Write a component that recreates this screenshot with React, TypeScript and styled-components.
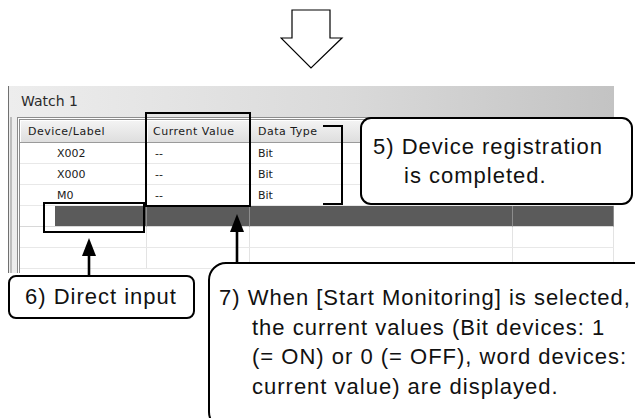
import React from "react";
import styled, { createGlobalStyle } from "styled-components";

const GlobalStyle = createGlobalStyle`
  html, body {
    margin: 0;
    padding: 0;
    background: #fff;
    overflow: hidden;
  }
`;

const Page = styled.div`
  position: relative;
  width: 635px;
  height: 418px;
  overflow: hidden;
  background: #fff;
`;

const ArrowRow = styled.div`
  height: 86px;
  box-sizing: border-box;
  padding: 9px 0 0 280px;
`;

const Window = styled.div`
  margin-left: 8px;
  width: 605px;
  height: 187px;
  display: flex;
  flex-direction: column;
  border-left: 1px solid #707070;
  background: linear-gradient(to right, #ededed, #dadada 55%, #c3c3c3);
  overflow: hidden;
`;

const TitleBar = styled.div`
  height: 31px;
  line-height: 31px;
  padding-left: 12px;
  font-family: "DejaVu Sans", Tahoma, sans-serif;
  font-size: 14px;
  color: #2a2a2a;
`;

const WindowBody = styled.div`
  flex: 1;
  display: flex;
  padding-left: 5px;
  border-left: 2px solid #bdbdbd;
  margin-left: 1px;
`;

const Grid = styled.div`
  flex: 1;
  display: grid;
  grid-template-columns: 127px 103px 263px 1fr;
  grid-auto-rows: 21px;
  grid-template-rows: 23px;
  border-top: 3px double #8c8c8c;
  border-left: 3px double #8c8c8c;
  background: #fff;
  font-family: "DejaVu Sans", Tahoma, sans-serif;
  font-size: 11px;
  color: #1a1a1a;
`;

const HeadCell = styled.div<{ $pad: number }>`
  display: flex;
  align-items: center;
  padding-left: ${(p) => p.$pad}px;
  background: linear-gradient(#f4f4f4, #dedede);
  border-right: 1px solid #9e9e9e;
  border-bottom: 1px solid #9a9a9a;
  box-shadow: inset 1px 1px 0 #fff;
  letter-spacing: 0.5px;
  white-space: nowrap;
  overflow: hidden;
`;

const Cell = styled.div<{ $pad: number; $dark?: boolean; $inset?: number }>`
  display: flex;
  align-items: center;
  padding-left: ${(p) => p.$pad}px;
  white-space: nowrap;
  border-bottom: 1px solid ${(p) => (p.$dark ? "#d8d8d8" : "#e8e8e8")};
  border-right: 1px solid ${(p) => (p.$dark ? "#8c8c8c" : "#e3e3e3")};
  background: ${(p) =>
    p.$dark
      ? `linear-gradient(to right, #fff ${p.$inset ?? 0}px, #5b5b5b ${p.$inset ?? 0}px)`
      : "#fff"};
`;

const Annotation = styled.div<{ $x: number; $y: number; $w: number; $h: number }>`
  position: absolute;
  left: ${(p) => p.$x}px;
  top: ${(p) => p.$y}px;
  width: ${(p) => p.$w}px;
  height: ${(p) => p.$h}px;
  box-sizing: border-box;
  border: 2px solid #000;
`;

const Bracket = styled(Annotation)`
  border-left: none;
`;

const PointerSvg = styled.svg<{ $x: number; $y: number }>`
  position: absolute;
  left: ${(p) => p.$x}px;
  top: ${(p) => p.$y}px;
  overflow: visible;
`;

const Callout = styled.div`
  box-sizing: border-box;
  flex-shrink: 0;
  background: #fff;
  border: 2px solid #000;
  font-family: "Liberation Sans", Arial, sans-serif;
  font-size: 22px;
  letter-spacing: 1px;
  color: #111;
  white-space: nowrap;
`;

const RegisteredNote = styled(Callout)`
  position: absolute;
  left: 360px;
  top: 117px;
  width: 273px;
  height: 88px;
  border-radius: 11px;
  padding: 13px 0 0 42px;
  text-indent: -31px;
  line-height: 29px;
`;

const CalloutRow = styled.div`
  display: flex;
  align-items: flex-start;
  gap: 13px;
  padding-left: 8px;
`;

const InputNote = styled(Callout)`
  margin-top: 2px;
  width: 187px;
  height: 44px;
  border-radius: 8px;
  padding-left: 15px;
  line-height: 40px;
`;

const MonitorNote = styled(Callout)`
  position: relative;
  z-index: 1;
  margin-top: -11px;
  width: 470px;
  height: 168px;
  border-radius: 18px;
  padding: 19px 0 0 42px;
  text-indent: -33px;
  line-height: 29.5px;
`;

const Pointer = ({ x, y, length }: { x: number; y: number; length: number }) => (
  <PointerSvg $x={x - 8} $y={y} width={16} height={length} viewBox={`0 0 16 ${length}`}>
    <polygon points="8,0 1,18 15,18" fill="#000" />
    <line x1={8} y1={17} x2={8} y2={length} stroke="#000" strokeWidth={2.6} />
  </PointerSvg>
);

const rows = [
  { device: "X002", value: "--", type: "Bit" },
  { device: "X000", value: "--", type: "Bit" },
  { device: "M0", value: "--", type: "Bit" },
];

const App = () => {
  return (
    <Page>
      <GlobalStyle />
      <ArrowRow>
        <svg width={64} height={62} viewBox="0 0 64 62">
          <polygon
            points="12,1 50,1 50,29 62,29 31,59 1,29 12,29"
            fill="#fff"
            stroke="#000"
            strokeWidth={1.2}
          />
        </svg>
      </ArrowRow>

      <Window>
        <TitleBar>Watch 1</TitleBar>
        <WindowBody>
          <Grid>
            <HeadCell $pad={8}>Device/Label</HeadCell>
            <HeadCell $pad={6}>Current Value</HeadCell>
            <HeadCell $pad={8}>Data Type</HeadCell>
            <HeadCell $pad={8} />
            {rows.map((row) => (
              <React.Fragment key={row.device}>
                <Cell $pad={37}>{row.device}</Cell>
                <Cell $pad={8}>{row.value}</Cell>
                <Cell $pad={8}>{row.type}</Cell>
                <Cell $pad={8} />
              </React.Fragment>
            ))}
            <Cell $pad={0} $dark $inset={35} />
            <Cell $pad={0} $dark />
            <Cell $pad={0} $dark />
            <Cell $pad={0} $dark />
            {[0, 1].map((i) => (
              <React.Fragment key={i}>
                <Cell $pad={0} />
                <Cell $pad={0} />
                <Cell $pad={0} />
                <Cell $pad={0} />
              </React.Fragment>
            ))}
          </Grid>
        </WindowBody>
      </Window>

      <CalloutRow>
        <InputNote>6) Direct input</InputNote>
        <MonitorNote>
          7) When [Start Monitoring] is selected,
          <br />
          the current values (Bit devices: 1
          <br />
          (= ON) or 0 (= OFF), word devices:
          <br />
          current value) are displayed.
        </MonitorNote>
      </CalloutRow>

      <Annotation $x={145} $y={112} $w={106} $h={95} />
      <Bracket $x={323} $y={125} $w={20} $h={80} />
      <Annotation $x={43} $y={202} $w={102} $h={31} />
      <Pointer x={89} y={238} length={37} />
      <Pointer x={237} y={214} length={48} />

      <RegisteredNote>
        5) Device registration
        <br />
        is completed.
      </RegisteredNote>
    </Page>
  );
};

export default App;
